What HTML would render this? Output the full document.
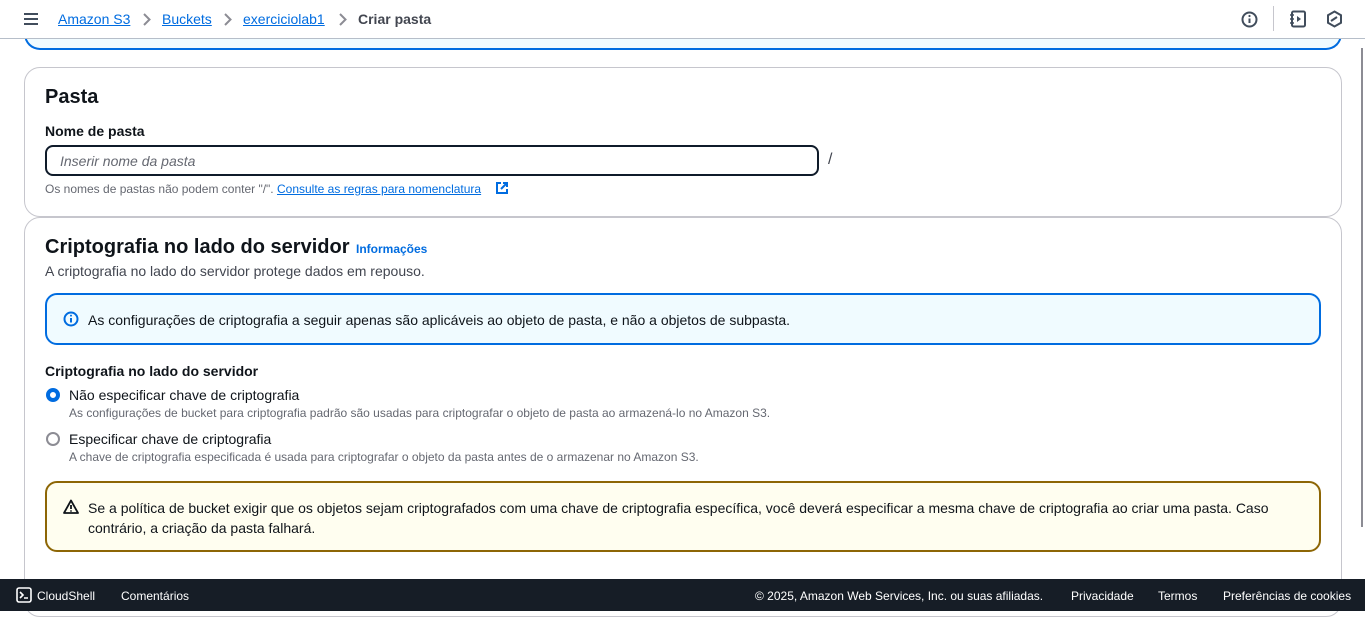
<!DOCTYPE html>
<html><head><meta charset="utf-8"><style>
*{box-sizing:border-box;margin:0;padding:0}
body{width:1365px;height:611px;overflow:hidden;background:#fff;font-family:"Liberation Sans",sans-serif;color:#0f141a;position:relative;font-size:14px}
.a{position:absolute;white-space:nowrap}
.hdr{position:absolute;left:0;top:0;width:1365px;height:39px;background:#fff;border-bottom:1px solid #b6bec9;z-index:3}
.lnk{color:#006ce0;text-decoration:underline}
.panel{position:absolute;left:24px;width:1318px;border:1px solid #c6c6cd;border-radius:16px;background:#fff}
.ft{position:absolute;left:0;top:579px;width:1365px;height:32px;background:#161d26;color:#fff;font-size:12px;z-index:4}
</style></head><body>
<div class="hdr">
 <svg class="a" style="left:23px;top:12px" width="16" height="14"><path d="M1 2h14M1 7h14M1 12h14" stroke="#414d5c" stroke-width="2"/></svg>
 <span class="a lnk" style="left:58px;top:11px;font-size:14px">Amazon S3</span>
 <svg class="a" style="left:142px;top:13px" width="10" height="13"><path d="M2 1l5.5 5.5L2 12" fill="none" stroke="#8c8c94" stroke-width="2"/></svg>
 <span class="a lnk" style="left:162px;top:11px;font-size:14px">Buckets</span>
 <svg class="a" style="left:223px;top:13px" width="10" height="13"><path d="M2 1l5.5 5.5L2 12" fill="none" stroke="#8c8c94" stroke-width="2"/></svg>
 <span class="a lnk" style="left:243px;top:11px;font-size:14px">exerciciolab1</span>
 <svg class="a" style="left:338px;top:13px" width="10" height="13"><path d="M2 1l5.5 5.5L2 12" fill="none" stroke="#8c8c94" stroke-width="2"/></svg>
 <span class="a" style="left:358px;top:11px;font-size:14px;font-weight:bold;color:#424650">Criar pasta</span>
 <svg class="a" style="left:1241px;top:11px" width="17" height="17"><circle cx="8.5" cy="8.5" r="7" fill="none" stroke="#414d5c" stroke-width="2"/><path d="M8.5 7.5v4.5" stroke="#414d5c" stroke-width="2"/><circle cx="8.5" cy="5" r="1.1" fill="#414d5c"/></svg>
 <div class="a" style="left:1273px;top:6px;width:1px;height:25px;background:#c6c6cd"></div>
 <svg class="a" style="left:1289px;top:10px" width="18" height="18"><rect x="3" y="1.5" width="13" height="15" rx="1.5" fill="none" stroke="#414d5c" stroke-width="2"/><path d="M1 5h4M1 9h4M1 13h4" stroke="#414d5c" stroke-width="1.6"/><path d="M8 6l4 3-4 3z" fill="#414d5c"/></svg>
 <svg class="a" style="left:1326px;top:10px" width="17" height="18"><path d="M8.5 1.5l6.5 3.7v7.6l-6.5 3.7-6.5-3.7V5.2z" fill="none" stroke="#414d5c" stroke-width="2"/><path d="M5 11l6-4" stroke="#414d5c" stroke-width="2"/></svg>
</div>
<div class="a" style="left:24px;top:0;width:1318px;height:50px;border:2px solid #006ce0;border-top:none;border-radius:0 0 16px 16px;background:#f0fbff"></div>
<div class="a" style="left:1361px;top:48px;width:2px;height:479px;background:#8c8c94"></div>

<div class="panel" style="top:67px;height:150px">
 <span class="a" style="left:20px;top:18px;font-size:20px;font-weight:bold">Pasta</span>
 <span class="a" style="left:20px;top:55px;font-size:14px;font-weight:bold">Nome de pasta</span>
 <div class="a" style="left:20px;top:77px;width:774px;height:31px;border:2px solid #0f1b2a;border-radius:8px"></div>
 <span class="a" style="left:35px;top:85px;font-style:italic;color:#656871;font-size:14px">Inserir nome da pasta</span>
 <span class="a" style="left:803px;top:83px;font-size:16px;color:#424650">/</span>
 <span class="a" style="left:20px;top:114px;font-size:12px;color:#656871">Os nomes de pastas não podem conter "/". <span class="lnk">Consulte as regras para nomenclatura</span></span>
 <svg class="a" style="left:470px;top:113px" width="14" height="14"><path d="M6 2H2v10h10V8M8 2h4v4M12 2L6 8" fill="none" stroke="#006ce0" stroke-width="2"/></svg>
</div>

<div class="panel" style="top:217px;height:400px">
 <span class="a" style="left:20px;top:18px;font-size:20px;font-weight:bold">Criptografia no lado do servidor</span>
 <span class="a" style="left:331px;top:24px;font-size:12px;font-weight:bold;color:#006ce0">Informações</span>
 <span class="a" style="left:20px;top:45px;font-size:14px;color:#424650">A criptografia no lado do servidor protege dados em repouso.</span>
 <div class="a" style="left:20px;top:75px;width:1276px;height:52px;border:2px solid #006ce0;border-radius:12px;background:#f0fbff"></div>
 <svg class="a" style="left:38px;top:93px" width="16" height="16"><circle cx="8" cy="8" r="6.5" fill="none" stroke="#006ce0" stroke-width="2"/><path d="M8 7v4.5" stroke="#006ce0" stroke-width="2"/><circle cx="8" cy="4.6" r="1" fill="#006ce0"/></svg>
 <span class="a" style="left:63px;top:94px;font-size:14px">As configurações de criptografia a seguir apenas são aplicáveis ao objeto de pasta, e não a objetos de subpasta.</span>
 <span class="a" style="left:20px;top:145px;font-size:14px;font-weight:bold">Criptografia no lado do servidor</span>
 <div class="a" style="left:21px;top:170px;width:14px;height:14px;border-radius:50%;border:4px solid #006ce0;background:#fff"></div>
 <span class="a" style="left:44px;top:169px;font-size:14px">Não especificar chave de criptografia</span>
 <span class="a" style="left:44px;top:188px;font-size:12px;color:#656871">As configurações de bucket para criptografia padrão são usadas para criptografar o objeto de pasta ao armazená-lo no Amazon S3.</span>
 <div class="a" style="left:21px;top:214px;width:14px;height:14px;border-radius:50%;border:2px solid #8c8c94;background:#fff"></div>
 <span class="a" style="left:44px;top:213px;font-size:14px">Especificar chave de criptografia</span>
 <span class="a" style="left:44px;top:232px;font-size:12px;color:#656871">A chave de criptografia especificada é usada para criptografar o objeto da pasta antes de o armazenar no Amazon S3.</span>
 <div class="a" style="left:20px;top:263px;width:1276px;height:71px;border:2px solid #8d6605;border-radius:12px;background:#fffef0"></div>
 <svg class="a" style="left:38px;top:281px" width="16" height="15"><path d="M8 1.5L15 14H1z" fill="none" stroke="#0f141a" stroke-width="1.8" stroke-linejoin="round"/><path d="M8 6v4" stroke="#0f141a" stroke-width="1.8"/><circle cx="8" cy="12" r=".9" fill="#0f141a"/></svg>
 <span class="a" style="left:63px;top:282px;font-size:14px">Se a política de bucket exigir que os objetos sejam criptografados com uma chave de criptografia específica, você deverá especificar a mesma chave de criptografia ao criar uma pasta. Caso</span>
 <span class="a" style="left:63px;top:302px;font-size:14px">contrário, a criação da pasta falhará.</span>
</div>

<div class="ft">
 <svg class="a" style="left:16px;top:8px" width="16" height="16"><rect x="1" y="1" width="14" height="14" rx="2" fill="none" stroke="#fff" stroke-width="1.6"/><path d="M4 5l3 3-3 3M8 11h4" fill="none" stroke="#fff" stroke-width="1.6"/></svg>
 <span class="a" style="left:37px;top:10px">CloudShell</span>
 <span class="a" style="left:121px;top:10px">Comentários</span>
 <span class="a" style="left:755px;top:10px">© 2025, Amazon Web Services, Inc. ou suas afiliadas.</span>
 <span class="a" style="left:1071px;top:10px">Privacidade</span>
 <span class="a" style="left:1158px;top:10px">Termos</span>
 <span class="a" style="left:1223px;top:10px">Preferências de cookies</span>
</div>
</body></html>
